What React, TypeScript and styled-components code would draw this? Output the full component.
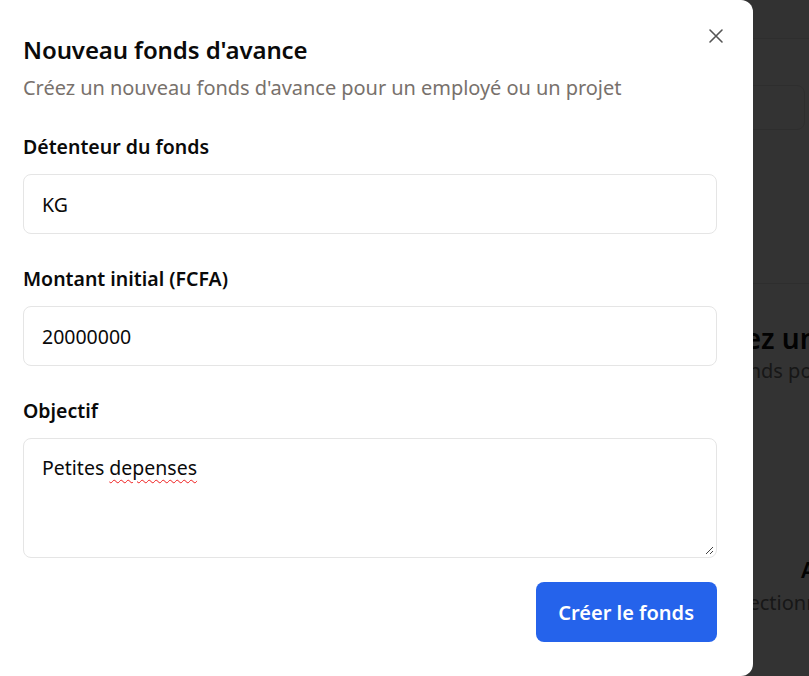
import React from "react";
import styled, { createGlobalStyle } from "styled-components";

const GlobalStyle = createGlobalStyle`
  html, body { margin: 0; padding: 0; background: #ffffff; }
  body {
    font-family: "Noto Sans", "Open Sans", "Liberation Sans", sans-serif;
    color: #0a0a0a;
    overflow: hidden;
  }
  * { box-sizing: border-box; }
`;

/* ---------- background page (behind the overlay) ---------- */
const Page = styled.div`
  width: 809px;
  height: 676px;
  background: #ffffff;
  display: flex;
  flex-direction: column;
  overflow: hidden;
`;

const TopBar = styled.header`
  height: 39px;
  border-bottom: 1px solid #e5e5e5;
  background: #fafafa;
`;

const Main = styled.main`
  display: flex;
  flex-direction: column;
  padding: 46px 0 0 745px;
`;

const SearchCard = styled.div`
  height: 45px;
  width: 60px;
  border: 1px solid #e5e5e5;
  border-radius: 8px;
  background: #fcfcfc;
`;

const Divider = styled.div`
  margin: 153px 0 0 -745px;
  height: 1px;
  background: #e5e5e5;
`;

const EmptyBlock = styled.section`
  display: flex;
  flex-direction: column;
  white-space: nowrap;
`;

const EmptyTitle = styled.h2<{ $top: number; $size: number; $shift: number }>`
  margin: ${(p) => p.$top}px 0 0 ${(p) => p.$shift}px;
  font-size: ${(p) => p.$size}px;
  font-weight: 600;
  line-height: 1.2;
  color: #0a0a0a;
`;

const EmptyText = styled.p<{ $top: number; $shift: number }>`
  margin: ${(p) => p.$top}px 0 0 ${(p) => p.$shift}px;
  font-size: 20px;
  line-height: 1.3;
  color: #737373;
`;

/* ---------- overlay + dialog ---------- */
const Overlay = styled.div`
  position: fixed;
  inset: 0;
  background: rgba(0, 0, 0, 0.8);
`;

const Dialog = styled.div`
  position: fixed;
  left: 0;
  top: 0;
  width: 753px;
  height: 676px;
  background: #ffffff;
  border-radius: 0 12px 12px 0;
  padding: 32px 36px 0 23px;
  display: flex;
  flex-direction: column;
`;

const CloseButton = styled.button`
  position: absolute;
  top: 27px;
  right: 28px;
  width: 18px;
  height: 18px;
  padding: 0;
  border: none;
  background: transparent;
  display: flex;
  align-items: center;
  justify-content: center;
  color: #555555;
  cursor: pointer;
`;

const Title = styled.h1`
  margin: 0;
  font-size: 24px;
  line-height: 36px;
  font-weight: 600;
  color: #0a0a0a;
  letter-spacing: -0.1px;
`;

const Description = styled.p`
  margin: 6px 0 0;
  font-size: 20px;
  line-height: 28px;
  color: #78716c;
  letter-spacing: -0.05px;
`;

const Form = styled.form`
  margin-top: 33px;
  display: flex;
  flex-direction: column;
  gap: 33px;
`;

const Field = styled.div`
  display: flex;
  flex-direction: column;
  gap: 15px;
`;

const Label = styled.label`
  font-size: 19.5px;
  line-height: 24px;
  font-weight: 600;
  color: #0a0a0a;
`;

const Input = styled.input`
  width: 100%;
  height: 60px;
  padding: 0 18px;
  border: 1px solid #e5e5e5;
  border-radius: 8px;
  font-family: inherit;
  font-size: 19.5px;
  color: #0a0a0a;
  background: #ffffff;
  outline: none;
`;

const Footer = styled.div`
  margin-top: -9px;
  display: flex;
  justify-content: flex-end;
`;

const PrimaryButton = styled.button`
  height: 60px;
  padding: 0 23px 0 22px;
  border: none;
  border-radius: 8px;
  background: #2563eb;
  color: #ffffff;
  font-family: inherit;
  font-size: 20px;
  font-weight: 600;
  cursor: pointer;
`;

const Squiggle = styled.span`
  text-decoration: underline wavy #ef1c1c;
  text-decoration-thickness: 1.3px;
  text-underline-offset: 4px;
`;

const FakeTextArea = styled.div`
  position: relative;
  width: 100%;
  height: 120px;
  padding: 15px 18px;
  border: 1px solid #e5e5e5;
  border-radius: 8px;
  font-size: 19.5px;
  line-height: 28px;
  color: #0a0a0a;
  background: #ffffff;
`;

const Grip = styled.svg`
  position: absolute;
  right: 2px;
  bottom: 2px;
`;

export default function App() {
  return (
    <>
      <GlobalStyle />
      <Page>
        <TopBar />
        <Main>
          <SearchCard />
          <Divider />
          <EmptyBlock>
            <EmptyTitle $top={38} $size={28} $shift={-46}>Créez un premier fonds</EmptyTitle>
            <EmptyText $top={2} $shift={-80}>Aucun fonds pour le moment</EmptyText>
          </EmptyBlock>
          <EmptyBlock>
            <EmptyTitle $top={172} $size={22} $shift={56}>Aucun fonds</EmptyTitle>
            <EmptyText $top={8} $shift={-24}>Sélectionnez un fonds</EmptyText>
          </EmptyBlock>
        </Main>
      </Page>
      <Overlay />
      <Dialog role="dialog" aria-labelledby="dlg-title">
        <CloseButton aria-label="Fermer">
          <svg width="16" height="16" viewBox="0 0 16 16" fill="none">
            <path d="M2 2L14 14M14 2L2 14" stroke="currentColor" strokeWidth="1.6" strokeLinecap="round" />
          </svg>
        </CloseButton>
        <Title id="dlg-title">Nouveau fonds d'avance</Title>
        <Description>Créez un nouveau fonds d'avance pour un employé ou un projet</Description>
        <Form onSubmit={(e) => e.preventDefault()}>
          <Field>
            <Label htmlFor="holder">Détenteur du fonds</Label>
            <Input id="holder" defaultValue="KG" />
          </Field>
          <Field>
            <Label htmlFor="amount">Montant initial (FCFA)</Label>
            <Input id="amount" defaultValue="20000000" />
          </Field>
          <Field>
            <Label htmlFor="goal">Objectif</Label>
            <FakeTextArea id="goal">
              Petites <Squiggle>depenses</Squiggle>
              <Grip width="10" height="10" viewBox="0 0 10 10">
                <path d="M9 2L2 9M9 6L6 9" stroke="#444" strokeWidth="1" />
              </Grip>
            </FakeTextArea>
          </Field>
          <Footer>
            <PrimaryButton type="submit">Créer le fonds</PrimaryButton>
          </Footer>
        </Form>
      </Dialog>
    </>
  );
}
